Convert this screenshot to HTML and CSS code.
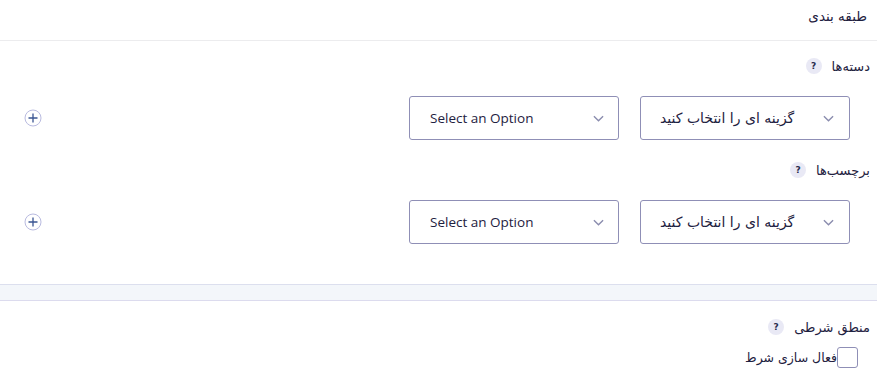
FILE: index.html
```html
<!DOCTYPE html>
<html lang="fa" dir="rtl">
<head>
<meta charset="utf-8">
<link rel="stylesheet" href="styles.css">
</head>
<body>
<div class="page">
  <div class="header">طبقه بندی</div>
  <div class="section">
    <div class="label"><span>دسته‌ها</span><span class="help">?</span></div>
    <div class="row">
      <div class="select fa"><span>گزینه ای را انتخاب کنید</span><svg class="chev" viewBox="0 0 12 7" width="11" height="7"><path d="M1 1l5 5 5-5" fill="none" stroke="#8a8cae" stroke-width="1.5"/></svg></div>
      <div class="select en"><span>Select an Option</span><svg class="chev" viewBox="0 0 12 7" width="11" height="7"><path d="M1 1l5 5 5-5" fill="none" stroke="#8a8cae" stroke-width="1.5"/></svg></div>
      <div class="plus"><svg viewBox="0 0 18 18" width="18" height="18"><circle cx="9" cy="9" r="8" fill="none" stroke="#b9bbe0" stroke-width="1"/><path d="M9 4.5v9M4.5 9h9" stroke="#3a5592" stroke-width="1.3"/></svg></div>
    </div>
    <div class="label"><span>برچسب‌ها</span><span class="help">?</span></div>
    <div class="row">
      <div class="select fa"><span>گزینه ای را انتخاب کنید</span><svg class="chev" viewBox="0 0 12 7" width="11" height="7"><path d="M1 1l5 5 5-5" fill="none" stroke="#8a8cae" stroke-width="1.5"/></svg></div>
      <div class="select en"><span>Select an Option</span><svg class="chev" viewBox="0 0 12 7" width="11" height="7"><path d="M1 1l5 5 5-5" fill="none" stroke="#8a8cae" stroke-width="1.5"/></svg></div>
      <div class="plus"><svg viewBox="0 0 18 18" width="18" height="18"><circle cx="9" cy="9" r="8" fill="none" stroke="#b9bbe0" stroke-width="1"/><path d="M9 4.5v9M4.5 9h9" stroke="#3a5592" stroke-width="1.3"/></svg></div>
    </div>
  </div>
  <div class="band"></div>
  <div class="section2">
    <div class="label"><span>منطق شرطی</span><span class="help">?</span></div>
    <label class="check"><span class="box"></span><span>فعال سازی شرط</span></label>
  </div>
</div>
</body>
</html>
```
FILE: styles.css
```css
html, body { margin: 0; padding: 0; background: #fff; }
body {
  font-family: "DejaVu Sans", "Open Sans", sans-serif;
  color: #1e2140;
  width: 877px;
  height: 389px;
  overflow: hidden;
}
.page { display: flex; flex-direction: column; }
.header {
  height: 41px;
  box-sizing: border-box;
  padding: 8px 10px 0 0;
  font-size: 13.5px;
  border-bottom: 1px solid #ececee;
}
.section { padding: 16px 7px 40px 0; }
.label {
  display: flex;
  align-items: center;
  gap: 10px;
  font-size: 13px;
  height: 18px;
}
.help {
  width: 16px; height: 16px;
  border-radius: 50%;
  background: #e9e9f5;
  font-size: 9px;
  font-weight: bold;
  font-family: "DejaVu Sans", sans-serif;
  display: flex; align-items: center; justify-content: center;
  color: #2a2d4d;
}
.row {
  display: flex;
  align-items: center;
  gap: 21px;
  padding: 21px 20px 0 24px;
  margin-bottom: 21px;
}
.section .row:last-child { margin-bottom: 0; }
.select {
  width: 210px;
  height: 44px;
  box-sizing: border-box;
  border: 1px solid #8f8fb6;
  border-radius: 3px;
  display: flex;
  align-items: center;
  justify-content: space-between;
  direction: ltr;
}
.select.fa { padding: 0 15px 0 19px; font-size: 14px; }
.select.fa span { direction: rtl; }
.select.en { padding: 0 14px 0 20px; font-family: "Open Sans", sans-serif; font-size: 13.5px; }
.chev { display: block; }
.plus { margin-right: auto; display: flex; }
.band {
  height: 15px;
  background: #f3f6fa;
  border-top: 1px solid #dcdfee;
  border-bottom: 1px solid #dcdbee;
}
.section2 { padding: 17px 7px 0 0; }
.check {
  display: flex;
  align-items: center;
  gap: 0;
  margin: 11px 12px 0 0;
  font-size: 12.5px;
}
.box {
  width: 21px; height: 21px;
  box-sizing: border-box;
  border: 1px solid #8f8fb6;
  border-radius: 3px;
}
```
